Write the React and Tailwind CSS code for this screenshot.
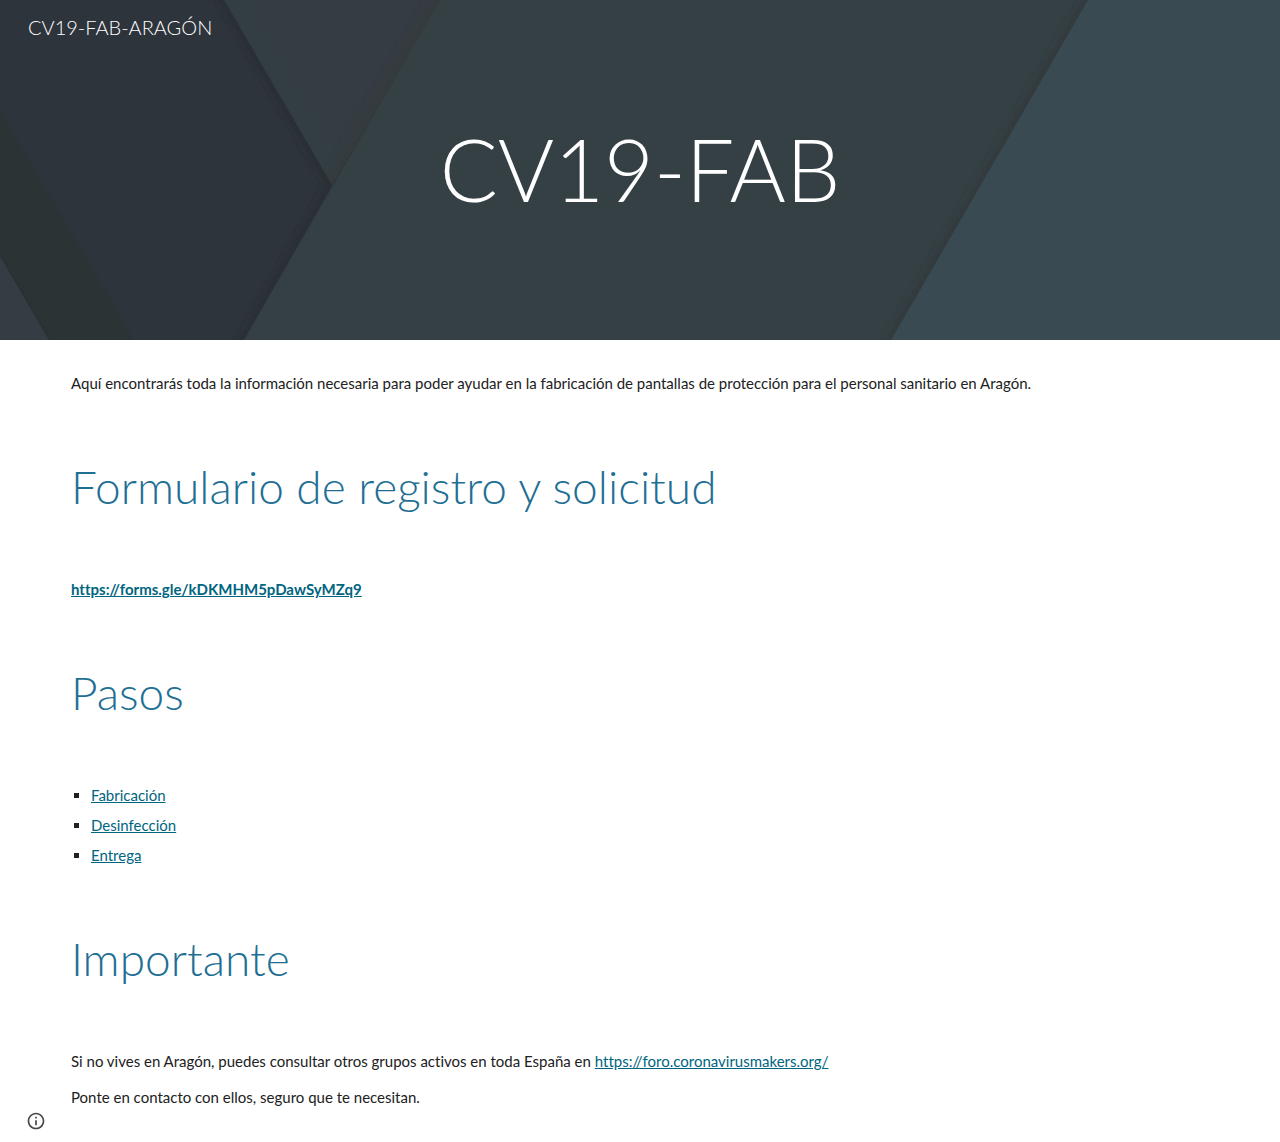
const steps = ["Fabricación", "Desinfección", "Entrega"];

function HeroBackdrop() {
  return (
    <svg
      className="absolute inset-0 h-full w-full"
      viewBox="0 0 1280 340"
      preserveAspectRatio="xMidYMid slice"
      aria-hidden="true"
    >
      <defs>
        <filter id="shade" filterUnits="userSpaceOnUse" x="-40" y="-40" width="1360" height="420">
          <feGaussianBlur stdDeviation="4" />
        </filter>
        <linearGradient id="wedge" gradientUnits="userSpaceOnUse" x1="270" y1="80" x2="330" y2="45">
          <stop offset="0" stopColor="#333e43" />
          <stop offset="1" stopColor="#353c43" />
        </linearGradient>
        <clipPath id="leftClip">
          <path d="M0 0H224L332 185L244 340H0Z" />
        </clipPath>
        <clipPath id="wedgeClip">
          <path d="M224 0H440L332 185Z" />
        </clipPath>
        <clipPath id="middleClip">
          <path d="M440 0H1088L891 340H244Z" />
        </clipPath>
      </defs>
      <path d="M0 0H1280V340H0Z" fill="#2d343b" />
      <path d="M224 0H440L332 185Z" fill="url(#wedge)" />
      <g clipPath="url(#wedgeClip)">
        <path d="M444 -7L328 192" stroke="#343a3c" strokeWidth="16" filter="url(#shade)" />
      </g>
      <g clipPath="url(#leftClip)">
        <path d="M220 -7L332 185L240 347" fill="none" stroke="#252b2d" strokeWidth="6" filter="url(#shade)" />
        <path d="M0 111L134 340H50L0 254Z" fill="#2b3335" />
        <path d="M0 254L50 340H0Z" fill="#343d43" />
        <path d="M0 254L50 340" stroke="#293133" strokeWidth="2" />
      </g>
      <path d="M440 0H1088L891 340H244Z" fill="#354045" />
      <g clipPath="url(#middleClip)">
        <path d="M1092 -7L887 347" stroke="#303536" strokeWidth="6" filter="url(#shade)" />
      </g>
      <path d="M1088 0H1280V340H891Z" fill="#394a52" />
    </svg>
  );
}

function Section({ title, children }) {
  return (
    <section>
      <h2 className="mt-[65px] mb-[63px] text-[46px] leading-[54px] font-light text-[#1f6f95]">{title}</h2>
      {children}
    </section>
  );
}

function TextLink({ href, children }) {
  return (
    <a href={href} className="text-[#006580] underline">
      {children}
    </a>
  );
}

export default function App() {
  return (
    <div className="min-h-screen bg-white font-['Lato',sans-serif] text-[15px] leading-6 text-[#212121] [font-variant-ligatures:none]">
      <header className="relative flex h-[340px] flex-col bg-[#354045] text-white">
        <HeroBackdrop />
        <nav className="relative flex h-[54px] items-center px-7">
          <a href="#inicio" className="text-xl font-light">
            CV19-FAB-ARAGÓN
          </a>
        </nav>
        <h1 className="relative mt-14 text-center text-[86px] leading-[118px] font-light">CV19-FAB</h1>
      </header>

      <main className="px-[71px] pt-[31px] pb-8">
        <p>
          Aquí encontrarás toda la información necesaria para poder ayudar en la fabricación de pantallas de
          protección para el personal sanitario en Aragón.
        </p>

        <Section title="Formulario de registro y solicitud">
          <p className="font-bold">
            <TextLink href="https://forms.gle/kDKMHM5pDawSyMZq9">https://forms.gle/kDKMHM5pDawSyMZq9</TextLink>
          </p>
        </Section>

        <Section title="Pasos">
          <ul className="flex list-[square] flex-col gap-1.5 pl-5">
            {steps.map((step) => (
              <li key={step}>
                <TextLink href={"#" + step}>{step}</TextLink>
              </li>
            ))}
          </ul>
        </Section>

        <Section title="Importante">
          <p>
            Si no vives en Aragón, puedes consultar otros grupos activos en toda España en{" "}
            <TextLink href="https://foro.coronavirusmakers.org/">https://foro.coronavirusmakers.org/</TextLink>
          </p>
          <p className="mt-3">Ponte en contacto con ellos, seguro que te necesitan.</p>
        </Section>
      </main>

      <button type="button" aria-label="Información del sitio" className="fixed bottom-[11px] left-[26px] text-[#444746]">
        <svg className="h-5 w-5" viewBox="0 0 24 24" fill="currentColor" aria-hidden="true">
          <path d="M11 7h2v2h-2zm0 4h2v6h-2zm1-9C6.48 2 2 6.48 2 12s4.48 10 10 10 10-4.480 10-10S17.520 2 12 2zm0 18c-4.410 0-8-3.590-8-8s3.590-8 8-8 8 3.590 8 8-3.590 8-8 8z" />
        </svg>
      </button>
    </div>
  );
}
